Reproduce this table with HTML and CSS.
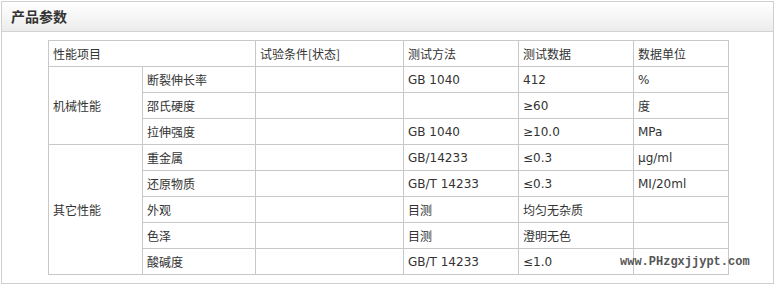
FILE: index.html
```html
<!DOCTYPE html>
<html lang="zh">
<head>
<meta charset="utf-8">
<title>产品参数</title>
<link rel="stylesheet" href="styles.css">
</head>
<body>
<div class="panel">
  <div class="panel-head">产品参数</div>
  <div class="panel-body">
    <table class="params">
      <colgroup>
        <col class="c1"><col class="c2"><col class="c3"><col class="c4"><col class="c5"><col class="c6">
      </colgroup>
      <tr><td colspan="2">性能项目</td><td>试验条件[状态]</td><td>测试方法</td><td>测试数据</td><td>数据单位</td></tr>
      <tr><td rowspan="3">机械性能</td><td>断裂伸长率</td><td></td><td class="lat">GB 1040</td><td class="lat">412</td><td class="lat">%</td></tr>
      <tr><td>邵氏硬度</td><td></td><td></td><td class="lat">≥60</td><td>度</td></tr>
      <tr><td>拉伸强度</td><td></td><td class="lat">GB 1040</td><td class="lat">≥10.0</td><td class="lat">MPa</td></tr>
      <tr><td rowspan="5">其它性能</td><td>重金属</td><td></td><td class="lat">GB/14233</td><td class="lat">≤0.3</td><td class="lat">μg/ml</td></tr>
      <tr><td>还原物质</td><td></td><td class="lat">GB/T 14233</td><td class="lat">≤0.3</td><td class="lat">MI/20ml</td></tr>
      <tr><td>外观</td><td></td><td>目测</td><td>均匀无杂质</td><td></td></tr>
      <tr><td>色泽</td><td></td><td>目测</td><td>澄明无色</td><td></td></tr>
      <tr><td>酸碱度</td><td></td><td class="lat">GB/T 14233</td><td class="lat">≤1.0</td><td></td></tr>
    </table>
    <div class="watermark">www.PHzgxjjypt.com</div>
  </div>
</div>
</body>
</html>
```
FILE: styles.css
```css
html, body {
  margin: 0;
  padding: 0;
  background: #fff;
}
body {
  font-family: "DejaVu Sans", "Noto Sans CJK SC", sans-serif;
  color: #333;
}
.panel {
  margin: 1px 0 0 1px;
  width: 771px;
  height: 281px;
  border: 1px solid #cfcfcf;
}
.panel-head {
  height: 29px;
  line-height: 29px;
  padding-left: 9px;
  border-bottom: 1px solid #d2d2d2;
  background: linear-gradient(#ffffff, #ececec);
  font-family: "Noto Sans CJK SC", sans-serif;
  font-size: 14px;
  font-weight: bold;
  color: #333;
}
.panel-body {
  position: relative;
  padding: 8px 0 0 46px;
}
.params {
  border-collapse: collapse;
  table-layout: fixed;
  width: 680px;
  font-size: 12px;
}
.params td {
  border: 1px solid #c8c8c8;
  height: 25px;
  padding: 0 0 0 4px;
  font-family: "Noto Sans CJK SC", sans-serif;
  color: #333;
  white-space: nowrap;
  vertical-align: middle;
}
.params td.lat {
  font-family: "DejaVu Sans", "Noto Sans CJK SC", sans-serif;
  font-size: 12px;
}
.c1 { width: 94px; }
.c2 { width: 113px; }
.c3 { width: 148px; }
.c4 { width: 115px; }
.c5 { width: 115px; }
.c6 { width: 95px; }
.watermark {
  position: absolute;
  left: 618px;
  top: 223px;
  font-family: "Liberation Mono", monospace;
  font-size: 12px;
  font-weight: bold;
  color: #555;
}
```
